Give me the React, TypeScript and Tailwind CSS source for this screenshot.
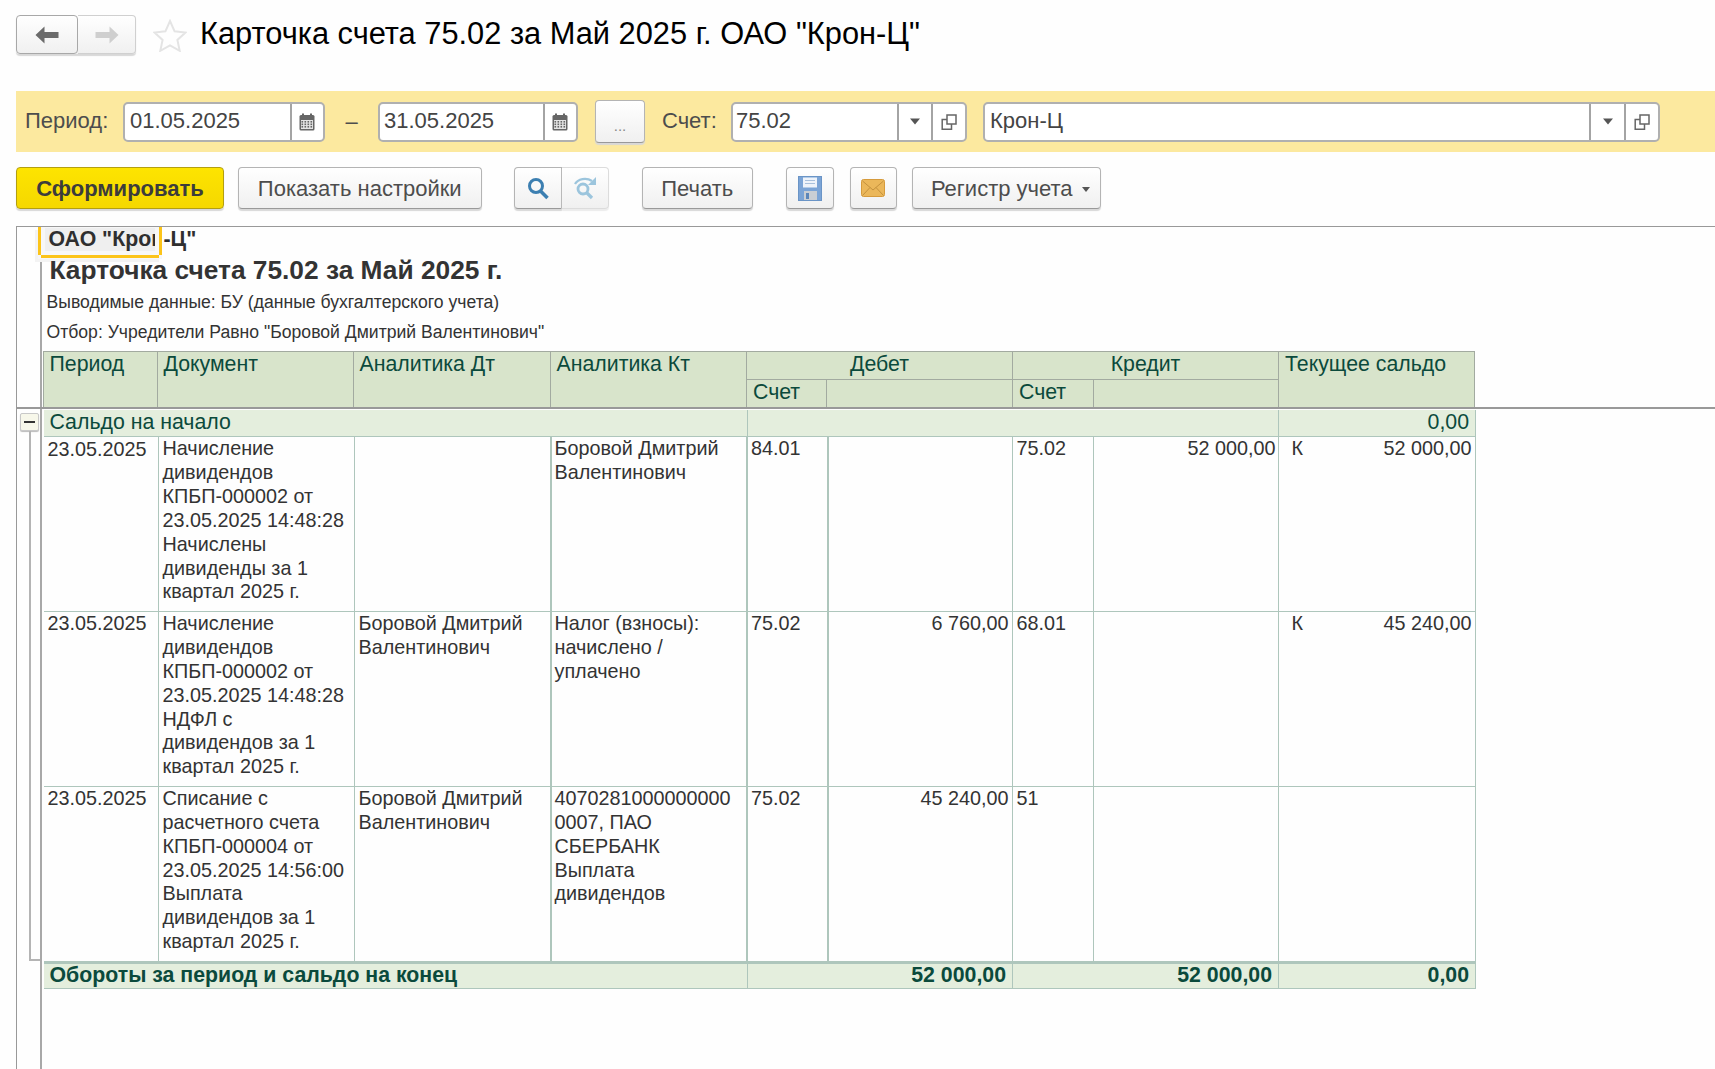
import React from "react";

const Calendar = () => (
  <svg className="mr-[1px]" width="16" height="18" viewBox="0 0 16 18">
    <rect x="0.5" y="2" width="15" height="15.5" rx="1.5" fill="#666" />
    <rect x="3" y="0.5" width="2" height="4" fill="#666" />
    <rect x="11" y="0.5" width="2" height="4" fill="#666" />
    <rect x="2" y="7" width="12" height="9" fill="#e4e4e4" />
    {[3, 6, 9, 12].map((x) => [8.5, 11, 13.5].map((y) => <rect key={x + "-" + y} x={x - 0.5} y={y - 0.5} width="1.6" height="1.6" fill="#666" />))}
  </svg>
);

const Caret = () => (
  <svg width="12" height="7" viewBox="0 0 12 7"><path d="M1 0.5h10L6 6.5z" fill="#555" /></svg>
);

const OpenIcon = () => (
  <svg width="16" height="16" viewBox="0 0 16 16" fill="none" stroke="#666" strokeWidth="1.5">
    <rect x="6" y="1" width="9" height="9" />
    <path d="M6 5.5H1.2v9.8h9.3V10" />
  </svg>
);

const Sep = "border-l-2 border-[#a4a4a4]";

function Field({ value, width, pad, slots }: { value: string; width: string; pad: string; slots: { w: string; icon: React.ReactNode }[] }) {
  return (
    <div className={"flex h-[40px] bg-white rounded-[5px] border-2 border-[#b0b0b0] overflow-hidden " + width}>
      <div className={"flex-1 text-[22px] leading-[34px] text-[#444] whitespace-nowrap " + pad}>{value}</div>
      {slots.map((s, i) => (
        <div key={i} className={"flex items-center justify-center " + Sep + " " + s.w}>{s.icon}</div>
      ))}
    </div>
  );
}

const btnBase =
  "flex items-center justify-center h-[42px] rounded-[4px] border border-[#b4b4b4] border-b-[#999] bg-gradient-to-b from-white to-[#f0f0f0] shadow-[0_2px_1px_#d8d8d8] text-[22px] text-[#4d4d4d] whitespace-nowrap";

const hCols = "grid grid-cols-[114px_196px_197px_196.5px_80px_186px_80.5px_185.5px_196px]";
const bCols = "grid grid-cols-[115px_196px_197px_196.5px_80.5px_184px_81px_185px_197px]";
const hCell = "border-r border-[#a2aaa0] pl-[6px] leading-[24px]";
const hBottom = "border-t border-[#a2aaa0]";
const cellB = "border-r border-[#aec6bc]";
const cellT = "border-r-2 border-[#aec6bc]";

function Lines({ items }: { items: string[] }) {
  return (
    <>
      {items.map((t, i) => (
        <div key={i} className="whitespace-nowrap">{t}</div>
      ))}
    </>
  );
}

type Row = {
  date: string;
  doc: string[];
  dt: string[];
  kt: string[];
  debAcc: string;
  debSum: string;
  credAcc: string;
  credSum: string;
  side: string;
  bal: string;
};

const rows: Row[] = [
  {
    date: "23.05.2025",
    doc: ["Начисление", "дивидендов", "КПБП-000002 от", "23.05.2025 14:48:28", "Начислены", "дивиденды за 1", "квартал 2025 г."],
    dt: [],
    kt: ["Боровой Дмитрий", "Валентинович"],
    debAcc: "84.01",
    debSum: "",
    credAcc: "75.02",
    credSum: "52 000,00",
    side: "К",
    bal: "52 000,00",
  },
  {
    date: "23.05.2025",
    doc: ["Начисление", "дивидендов", "КПБП-000002 от", "23.05.2025 14:48:28", "НДФЛ с", "дивидендов за 1", "квартал 2025 г."],
    dt: ["Боровой Дмитрий", "Валентинович"],
    kt: ["Налог (взносы):", "начислено /", "уплачено"],
    debAcc: "75.02",
    debSum: "6 760,00",
    credAcc: "68.01",
    credSum: "",
    side: "К",
    bal: "45 240,00",
  },
  {
    date: "23.05.2025",
    doc: ["Списание с", "расчетного счета", "КПБП-000004 от", "23.05.2025 14:56:00", "Выплата", "дивидендов за 1", "квартал 2025 г."],
    dt: ["Боровой Дмитрий", "Валентинович"],
    kt: ["4070281000000000", "0007, ПАО", "СБЕРБАНК", "Выплата", "дивидендов"],
    debAcc: "75.02",
    debSum: "45 240,00",
    credAcc: "51",
    credSum: "",
    side: "",
    bal: "",
  },
];

export default function App() {
  return (
    <div className="h-[1069px] w-[1715px] overflow-hidden bg-[#fefefe] flex flex-col font-['Liberation_Sans',Arial,sans-serif]">
      {/* Title row */}
      <div className="h-[91px] pl-4 flex items-start shrink-0">
        <div className="mt-[15px] w-[120px] h-[39px] flex rounded-[4px] bg-gradient-to-b from-white to-[#f0f0f0] shadow-[0_2px_1px_#d8d8d8]">
          <div className="w-[62px] flex items-center justify-center rounded-[4px] border border-[#a8a8a8]">
            <svg width="24" height="18" viewBox="0 0 24 18"><path d="M9.5 0.5v5.5H23.5v6H9.5v5.5L0.5 9z" fill="#6b6b6b" /></svg>
          </div>
          <div className="flex-1 flex items-center justify-center rounded-r-[4px] border border-l-0 border-[#d0d0d0]">
            <svg width="24" height="18" viewBox="0 0 24 18"><path d="M14.5 0.5v5.5H0.5v6H14.5v5.5L23.5 9z" fill="#cfcfcf" /></svg>
          </div>
        </div>
        <svg className="ml-[17px] mt-[19px]" width="34" height="33" viewBox="0 0 34 33">
          <path d="M17 2l4.6 10.3 11 1.2-8.200 7.400 2.300 10.900L17 26.300 7.300 31.800l2.300-10.900L1.400 13.500l11-1.200z" fill="none" stroke="#e4e4e4" strokeWidth="2" />
        </svg>
        <div className="ml-[13px] mt-[16px] text-[30.8px] leading-[36px] text-black whitespace-nowrap">
          Карточка счета 75.02 за Май 2025 г. ОАО "Крон-Ц"
        </div>
      </div>

      {/* Filter bar */}
      <div className="h-[61px] ml-4 bg-[#fce99f] flex items-center shrink-0 text-[22px] text-[#4d4d4d]">
        <div className="w-[107px] pl-[9px] -mt-[3px]">Период:</div>
        <Field value="01.05.2025" width="w-[202px]" pad="pl-[5px]" slots={[{ w: "w-[33px]", icon: <Calendar /> }]} />
        <div className="w-[53px] text-center">–</div>
        <Field value="31.05.2025" width="w-[200px]" pad="pl-[4px]" slots={[{ w: "w-[33px]", icon: <Calendar /> }]} />
        <div className={btnBase + " ml-[17px] w-[50px] !h-[43px] !text-[15px] !text-[#888] pt-[10px]"}>...</div>
        <div className="ml-[17px] w-[69px] -mt-[3px]">Счет:</div>
        <Field
          value="75.02"
          width="w-[235.5px]"
          pad="pl-[3px]"
          slots={[
            { w: "w-[34px]", icon: <Caret /> },
            { w: "w-[34px]", icon: <OpenIcon /> },
          ]}
        />
        <div className="ml-[16.5px]">
          <Field
            value="Крон-Ц"
            width="w-[677px]"
            pad="pl-[5px]"
            slots={[
              { w: "w-[35px]", icon: <Caret /> },
              { w: "w-[34px]", icon: <OpenIcon /> },
            ]}
          />
        </div>
      </div>

      {/* Toolbar */}
      <div className="mt-[15px] ml-4 flex h-[42px] shrink-0">
        <div className="flex items-center justify-center h-[42px] w-[208px] rounded-[4px] border border-[#b39f10] bg-gradient-to-b from-[#fde400] to-[#f5d800] shadow-[0_2px_1px_#d8d8d8] text-[22px] font-bold text-[#3c3c3c] whitespace-nowrap">
          Сформировать
        </div>
        <div className={btnBase + " ml-[14px] w-[243.500px]"}>Показать настройки</div>
        <div className="ml-[32.500px] flex w-[95px] h-[42px]">
          <div className={btnBase + " w-[48px] rounded-r-none"}>
            <svg width="24" height="24" viewBox="0 0 24 24" fill="none" stroke="#3c7fb1" strokeWidth="3">
              <circle cx="10" cy="10" r="6.500" />
              <path d="M14.500 15l7 7" strokeWidth="3.500" />
            </svg>
          </div>
          <div className={btnBase + " flex-1 rounded-l-none border-l-0 !border-[#dcdcdc] !shadow-[0_2px_1px_#ececec]"}>
            <svg width="26" height="26" viewBox="0 0 26 26" fill="none" stroke="#9cc5dd" strokeWidth="2.800">
              <circle cx="11" cy="14" r="5" />
              <path d="M15 18l5 5" strokeWidth="3.200" />
              <path d="M3 9c3-5 11-7 17-3" strokeWidth="2.300" />
              <path d="M24 2v8h-8z" fill="#9cc5dd" stroke="none" />
            </svg>
          </div>
        </div>
        <div className={btnBase + " ml-[33px] w-[110.500px]"}>Печать</div>
        <div className={btnBase + " ml-[33.500px] w-[48px]"}>
          <svg width="24" height="25" viewBox="0 0 24 25">
            <rect x="0.500" y="0.500" width="23" height="24" fill="#7ba4d6" stroke="#6a94c6" />
            <rect x="5" y="1.500" width="14" height="10" fill="#eef3fa" />
            <path d="M7 4.500h10M7 7.500h10" stroke="#a8c0dc" strokeWidth="1.200" />
            <rect x="6" y="15" width="13" height="9" fill="#c9ced4" />
            <rect x="8" y="17" width="3" height="6" fill="#5b86ba" />
          </svg>
        </div>
        <div className={btnBase + " ml-[15.500px] w-[47px]"}>
          <svg width="24" height="18" viewBox="0 0 24 18">
            <rect x="0.500" y="0.500" width="23" height="17" rx="2" fill="#ebb75a" stroke="#d69b3c" />
            <path d="M1.500 2l10.500 9L22.500 2M1.500 16.500L9 8.500M22.500 16.500L15 8.500" fill="none" stroke="#c4913c" strokeWidth="1" />
          </svg>
        </div>
        <div className={btnBase + " ml-[15.500px] w-[188.500px] pl-[8px]"}>
          <span>Регистр учета</span>
          <svg className="ml-[9px] mt-[3px]" width="8" height="5" viewBox="0 0 8 5"><path d="M0 0h8L4 5z" fill="#555" /></svg>
        </div>
      </div>

      {/* Report area */}
      <div className="mt-[17px] ml-4 flex-1 flex flex-col border-t border-l border-[#999] text-[19.8px]">
        <div className="flex h-[182px] border-b-2 border-[#999] shrink-0">
          <div className="w-[24.500px] border-r-2 border-[#a8a8a8] shrink-0" />
          <div className="flex flex-col">
            <div className="flex items-start h-[32px]">
              <div className="-ml-[4px] w-[124px] h-[32px] shrink-0 flex flex-col bg-[#f7f7f7] shadow-[-3px_3px_0_#f3f3f3]">
                <div className="flex h-[28px]">
                  <div className="w-[3px] bg-[#fcc419] shrink-0" />
                  <div className="ml-[4px] mt-px w-[110px] h-[23px] bg-[#efefef] overflow-hidden whitespace-nowrap font-bold text-[21.300px] text-[#2f2f2f] pl-[4px] leading-[22px] shrink-0">
                    ОАО "Крон-Ц"
                  </div>
                  <div className="ml-[4px] w-[3px] bg-[#fcc419] shrink-0" />
                </div>
                <div className="ml-[3px] w-[118px] h-[3px] bg-[#fcc419]" />
              </div>
              <div className="ml-[2px] mt-px font-bold text-[21.300px] text-[#2f2f2f] leading-[22px]">-Ц"</div>
            </div>
            <div className="pl-[8px] text-[26.300px] leading-[24px] -mt-px font-bold text-[#333] whitespace-nowrap">Карточка счета 75.02 за Май 2025 г.</div>
            <div className="pl-[5px] mt-[5px] text-[17.600px] leading-[30px] text-[#333] whitespace-nowrap">Выводимые данные: БУ (данные бухгалтерского учета)</div>
            <div className="pl-[5px] text-[17.600px] leading-[30px] text-[#333] whitespace-nowrap">Отбор: Учредители Равно "Боровой Дмитрий Валентинович"</div>
            <div className={hCols + " mt-[4px] ml-[1px] h-[56px] grid-rows-[27px_28px] bg-[#d8e4cb] border-t border-l border-[#a2aaa0] text-[#0b4a3c] text-[21.300px] w-[1432px]"}>
              <div className={hCell + " row-span-2"}>Период</div>
              <div className={hCell + " row-span-2"}>Документ</div>
              <div className={hCell + " row-span-2"}>Аналитика Дт</div>
              <div className={hCell + " row-span-2"}>Аналитика Кт</div>
              <div className={hCell + " col-span-2 text-center !pl-0"}>Дебет</div>
              <div className={hCell + " col-span-2 text-center !pl-0"}>Кредит</div>
              <div className={hCell + " row-span-2"}>Текущее сальдо</div>
              <div className={hCell + " " + hBottom}>Счет</div>
              <div className={hCell + " " + hBottom} />
              <div className={hCell + " " + hBottom}>Счет</div>
              <div className={hCell + " " + hBottom} />
            </div>
          </div>
        </div>

        <div className="flex flex-1">
          <div className="w-[24.500px] border-r-2 border-[#a8a8a8] shrink-0 flex flex-col">
            <div className="ml-[3px] mt-[3.500px] w-[19px] h-[18px] rounded-[2px] border border-[#c8c8c8] bg-[#f7f7ea] shadow-[0_1px_1px_#bbb] flex items-center justify-center shrink-0">
              <div className="w-[11px] h-[2px] bg-[#333]" />
            </div>
            <div className="ml-[11.500px] h-[530px] border-l-2 border-b-2 border-[#b4b4b4]" />
          </div>
          <div className="pl-[2px] pt-px w-[1434px] text-[#333]">
            <div className="grid grid-cols-[704px_531.500px_197px] h-[27px] bg-[#e4eedd] border-b border-[#aec6bc] text-[#0b4a3c] text-[21.300px] leading-[24px]">
              <div className={cellB + " pl-[6px]"}>Сальдо на начало</div>
              <div className={cellB} />
              <div className={cellB + " text-right pr-[6px]"}>0,00</div>
            </div>
            {rows.map((r, i) => (
              <div key={i} className={bCols + " h-[174.900px] border-b border-[#aec6bc] leading-[23.900px]"}>
                <div className={cellB + " pl-[4px] pt-[0.500px]"}>{r.date}</div>
                <div className={cellB + " pl-[4px]"}><Lines items={r.doc} /></div>
                <div className={cellT + " pl-[4px]"}><Lines items={r.dt} /></div>
                <div className={cellT + " pl-[3px]"}><Lines items={r.kt} /></div>
                <div className={cellT + " pl-[3px]"}>{r.debAcc}</div>
                <div className={cellB + " text-right pr-[3px]"}>{r.debSum}</div>
                <div className={cellB + " pl-[4px]"}>{r.credAcc}</div>
                <div className={cellB + " text-right pr-[2px]"}>{r.credSum}</div>
                <div className={cellB + " flex justify-between pl-[13px] pr-[3px]"}>
                  <span>{r.side}</span>
                  <span>{r.bal}</span>
                </div>
              </div>
            ))}
            <div className="grid grid-cols-[704px_265.500px_266px_197px] h-[27px] bg-[#e4eedd] border-t-2 border-b border-[#aec6bc] text-[#0b4a3c] text-[21.300px] font-bold leading-[22px]">
              <div className={cellB + " pl-[6px]"}>Обороты за период и сальдо на конец</div>
              <div className={cellB + " text-right pr-[6px]"}>52 000,00</div>
              <div className={cellB + " text-right pr-[6px]"}>52 000,00</div>
              <div className={cellB + " text-right pr-[6px]"}>0,00</div>
            </div>
          </div>
        </div>
      </div>
    </div>
  );
}
